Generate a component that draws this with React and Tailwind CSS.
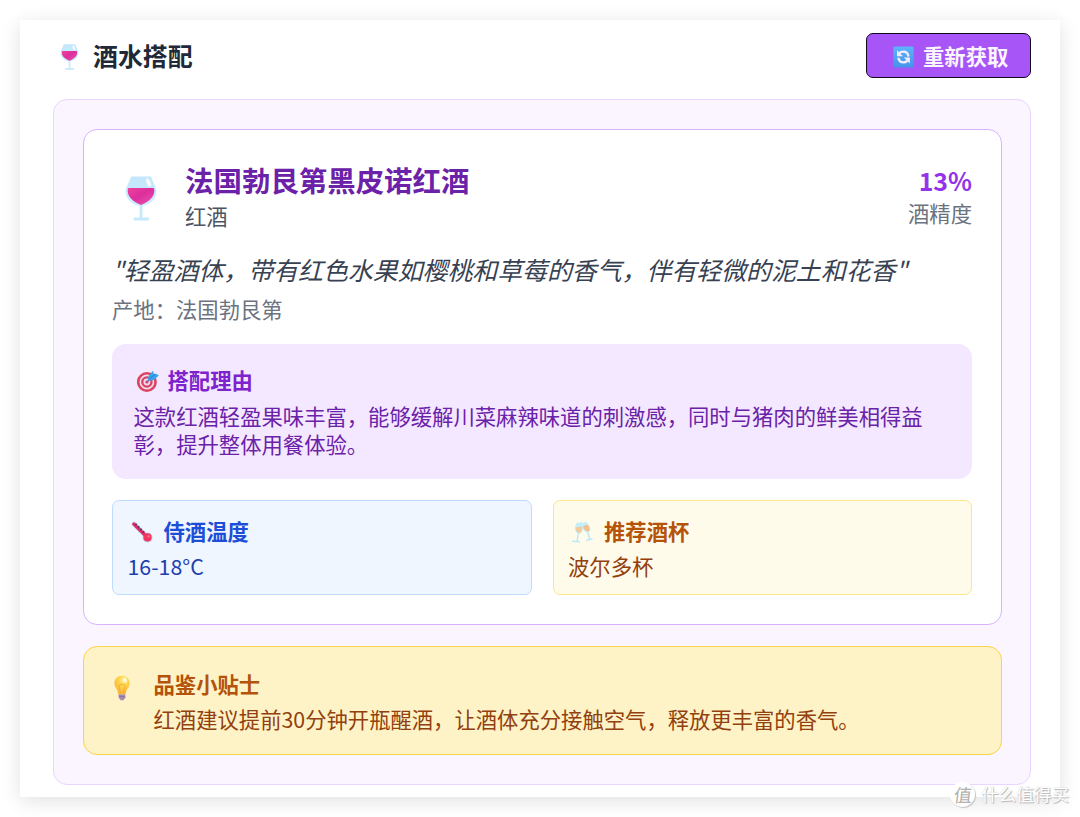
import React from 'react';

const WineGlass = ({ className }) => (
  <svg className={className} viewBox="0 0 32 45" fill="none">
    <defs>
      <linearGradient id="wine" x1="0" y1="0" x2="1" y2="1">
        <stop offset="0" stopColor="#f0409f" />
        <stop offset="0.45" stopColor="#dd2f9c" />
        <stop offset="0.75" stopColor="#e542a8" />
        <stop offset="1" stopColor="#9a3a9c" />
      </linearGradient>
      <linearGradient id="bowl" x1="0" y1="0" x2="0" y2="1">
        <stop offset="0" stopColor="#c3e6fc" />
        <stop offset="1" stopColor="#cdeefe" />
      </linearGradient>
    </defs>
    <path d="M7.5 .5h17c1 0 1.700.5 2 1.400L31 12.500c2 9-5 16.500-15 17.500C6 29-1 21.500 1 12.500L5.500 1.900C5.800 1 6.500.5 7.500.5Z" fill="url(#bowl)" />
    <rect x="14.600" y="29" width="2.800" height="14" fill="#c5eafc" />
    <rect x="8.500" y="41.500" width="15.500" height="3" rx="1" fill="#c5eafc" />
    <path d="M2.800 12.800q.3-.8 1.200-.8h24q.9 0 1.200.8c1 7.500-4.500 12.500-13.200 16.200C7.300 25.300 1.800 20.300 2.800 12.800Z" fill="url(#wine)" />
    <ellipse cx="23.500" cy="6.500" rx="2" ry="4.500" transform="rotate(-22 23.500 6.500)" fill="#f3fbff" />
  </svg>
);

const RefreshEmoji = () => (
  <svg className="mt-[3px] h-[22px] w-[21px]" viewBox="0 0 21 22" fill="none">
    <defs>
      <linearGradient id="tile" x1="0" y1="0" x2="0" y2="1">
        <stop offset="0" stopColor="#5cb3fb" />
        <stop offset="1" stopColor="#4593e8" />
      </linearGradient>
    </defs>
    <rect x="0.300" y="0.500" width="20.400" height="21" rx="1.500" fill="url(#tile)" />
    <path d="M15.500 10.500C15 7.200 12.500 5.600 10 5.700c-1.500 0-2.800.6-3.700 1.500" stroke="#f3eeff" strokeWidth="2.300" />
    <path d="M4 4.200v6h6Z" fill="#f3eeff" />
    <path d="M5.300 11.800c.5 3 2.700 4.600 5.200 4.600 1.500 0 2.800-.6 3.700-1.500" stroke="#f3eeff" strokeWidth="2.300" />
    <path d="M16.800 17.500v-6h-6Z" fill="#f3eeff" />
  </svg>
);

const TargetEmoji = () => (
  <svg className="h-[22px] w-[22px]" viewBox="0 0 22 22" fill="none">
    <circle cx="9.900" cy="12" r="8.700" fill="#f3dbe9" stroke="#dc4562" strokeWidth="2.600" />
    <circle cx="9.900" cy="12" r="4.600" fill="#f3dbe9" stroke="#d9436a" strokeWidth="2.300" />
    <circle cx="9.900" cy="12" r="1.600" fill="#d9436a" />
    <path d="M10 12l5-5.500" stroke="#5a6fb0" strokeWidth="1.300" />
    <path d="M11 9.500 11.500 6 16 .8l.8 3 3 .2 2 1.500-5 4.500-4.500.8Z" fill="#37a4ee" />
    <path d="m12.500 9.200 5.500-5" stroke="#2481cf" />
  </svg>
);

const ThermometerEmoji = () => (
  <svg className="h-[22px] w-[22px]" viewBox="0 0 22 22" fill="none">
    <path d="m3 3 13 13" stroke="#c8dcf3" strokeWidth="4.800" strokeLinecap="round" />
    <circle cx="16.600" cy="16.500" r="5" fill="#b7d4ed" />
    <path d="m2.800 3 13.200 13" stroke="#e22b61" strokeWidth="3.200" strokeLinecap="round" />
    <circle cx="16.500" cy="16.400" r="4.100" fill="#f23460" />
    <circle cx="17.500" cy="15.300" r="1.200" fill="#ff7185" />
    <path d="M5.700 2.700 4.300 4.100M8.200 5.200 6.800 6.600M10.700 7.700 9.300 9.100M13.200 10.200l-1.400 1.400" stroke="#55356f" strokeWidth="1.500" />
  </svg>
);

const ClinkEmoji = () => (
  <svg className="h-[22px] w-[22px]" viewBox="0 0 22 22" fill="none">
    <path d="M5.500 2 11 1l.8 6c.3 3-1.500 5.500-4.300 6C4.800 12 3.600 9 4 6Z" fill="#c4eef8" />
    <path d="M5 6.500 11 5.500c.6 3.600-.7 5.800-3.300 6.500C5.500 11 4.500 9 5 6.500Z" fill="#f6c995" />
    <path d="m7.200 12.500-1 7.500M1 20.300l8 .4" stroke="#bde9f5" strokeWidth="1.500" />
    <path d="m11 2 4.500-1.200 3.200 5c1.500 2.700.8 5-1.700 6-3-.5-5.200-2.700-5.700-5.500Z" fill="#c4eef8" />
    <path d="m12 5 4.800-1.200c2.200 3.200 2.200 5.700.3 6.700C14.500 10 12.500 8.200 12 5Z" fill="#f5bf88" />
    <path d="m16.800 11.500 2 7M15 19.500l6.500-1.800" stroke="#bde9f5" strokeWidth="1.500" />
  </svg>
);

const BulbEmoji = () => (
  <svg className="h-[26px] w-[18px]" viewBox="0 0 18 26" fill="none">
    <defs>
      <radialGradient id="bulb" cx="0.600" cy="0.250" r="0.750">
        <stop offset="0" stopColor="#fff0a0" />
        <stop offset="0.400" stopColor="#ffd449" />
        <stop offset="1" stopColor="#fbb23d" />
      </radialGradient>
    </defs>
    <path d="M9 .8c4.500 0 7.600 3.200 7.600 7.500 0 4.200-3.400 5.700-3.900 11.200H5.300C4.800 14 1.400 12.500 1.400 8.300 1.400 4 4.500.8 9 .8Z" fill="url(#bulb)" />
    <path d="M7.500 18.500 6 10.500c1-1.800 5-1.800 6 0l-1.500 8" stroke="#f2ae35" strokeWidth="1" />
    <ellipse cx="12" cy="5" rx="1.800" ry="2.700" transform="rotate(-30 12 5)" fill="#fff8d6" />
    <path d="M5.700 19.500h6.600v3.200l-2 2.500H7.700l-2-2.500Z" fill="#a68ab5" />
    <path d="m5.700 21 6.600 1" stroke="#8a6fa3" />
  </svg>
);

const InfoCard = ({ icon, title, value, className, titleClass, valueClass }) => (
  <div className={`h-[95px] rounded-[7px] border px-[14.500px] pt-[12px] ${className}`}>
    <div className="flex h-[35px] items-center">
      <span className="ml-[3px] flex w-[33px] pt-[2px]">{icon}</span>
      <span className={`font-bold ${titleClass}`}>{title}</span>
    </div>
    <div className={`leading-[35px] ${valueClass}`}>{value}</div>
  </div>
);

const Watermark = () => (
  <div className="absolute top-[782px] left-[950px] flex items-center gap-[6px] whitespace-nowrap">
    <div className="flex h-[25px] w-[25px] items-center justify-center rounded-full bg-white text-[18px] leading-6 text-[#b0b0b0] shadow-[1px_1px_1px_#c4c4c4]">
      <span className="-mt-[2px] -skew-x-6">值</span>
    </div>
    <span className="-mt-[2px] text-[17.600px] leading-[26px] text-white [text-shadow:1px_1px_1px_#b4b4b4,0_0_1px_#c4c4c4]">什么值得买</span>
  </div>
);

const App = () => {
  return (
    <div className="relative h-[817px] w-[1080px] overflow-hidden bg-white p-5 font-['Noto_Sans_CJK_SC',sans-serif] text-[21.330px]">
      <div className="h-[777px] rounded-[2px] bg-white pt-[13px] pr-[29px] pl-[33px] shadow-[0_4px_20px_rgba(0,0,0,0.12)]">
        <div className="flex h-[45px] items-center justify-between">
          <h2 className="-mt-px flex items-center text-[24.900px] leading-9 font-bold text-[#1f2937]">
            <WineGlass className="mt-[3px] mr-[14px] ml-[7px] h-[26px] w-[19px]" />
            酒水搭配
          </h2>
          <button className="flex h-[45px] w-[165px] items-center rounded-[7px] border border-[#12081e] bg-[#a855f7] pl-[26px] font-bold text-[#faf5ff]">
            <RefreshEmoji />
            <span className="ml-[9px]">重新获取</span>
          </button>
        </div>

        <div className="mt-[21px] h-[686px] rounded-[14px] border border-[#e9d5ff] bg-[#faf5ff] px-[28.500px] pt-[29px]">
          <div className="h-[496px] rounded-[14px] border border-[#d8b4fe] bg-white px-[28.500px] pt-[32px]">
            <div className="flex h-[74px]">
              <WineGlass className="mt-[14px] ml-[13px] h-[45px] w-[32px]" />
              <div className="ml-[28px] flex-1">
                <h3 className="text-[28.440px] leading-[36px] font-bold text-[#6b21a8]">法国勃艮第黑皮诺红酒</h3>
                <p className="leading-[35px] text-[#4b5563]">红酒</p>
              </div>
              <div className="text-right">
                <div className="text-[24.900px] leading-[36px] font-bold text-[#9333ea]">13%</div>
                <div className="leading-[29px] text-[#6b7280]">酒精度</div>
              </div>
            </div>
            <p className="mt-[13px] text-[24.900px] leading-[40px] whitespace-nowrap text-[#374151] italic">
              "轻盈酒体，带有红色水果如樱桃和草莓的香气，伴有轻微的泥土和花香"
            </p>
            <p className="leading-[40px] text-[#6b7280]">产地：法国勃艮第</p>

            <div className="mt-[15px] h-[135px] rounded-[14px] bg-[#f3e8ff] px-[21.500px] pt-[18px]">
              <div className="flex h-9 items-center">
                <span className="mt-px mr-[9px] ml-[3px]">
                  <TargetEmoji />
                </span>
                <span className="font-bold text-[#7e22ce]">搭配理由</span>
              </div>
              <p className="mt-[4px] leading-[28.400px] text-[#6b21a8]">
                这款红酒轻盈果味丰富，能够缓解川菜麻辣味道的刺激感，同时与猪肉的鲜美相得益彰，提升整体用餐体验。
              </p>
            </div>

            <div className="mt-[21px] grid grid-cols-2 gap-[21px]">
              <InfoCard
                icon={<ThermometerEmoji />}
                title="侍酒温度"
                value="16-18°C"
                className="border-[#bfdbfe] bg-[#eff6ff]"
                titleClass="text-[#1d4ed8]"
                valueClass="text-[#1e40af]"
              />
              <InfoCard
                icon={<ClinkEmoji />}
                title="推荐酒杯"
                value="波尔多杯"
                className="border-[#fde68a] bg-[#fffbeb]"
                titleClass="text-[#b45309]"
                valueClass="text-[#92400e]"
              />
            </div>
          </div>

          <div className="mt-[21px] flex h-[109px] rounded-[14px] border border-[#fcd34d] bg-[#fef3c7] pt-[19px] pl-[29px]">
            <div className="mt-[9px] w-[41px]">
              <BulbEmoji />
            </div>
            <div>
              <h4 className="leading-[35px] font-bold text-[#b45309]">品鉴小贴士</h4>
              <p className="leading-[35px] text-[#92400e]">红酒建议提前30分钟开瓶醒酒，让酒体充分接触空气，释放更丰富的香气。</p>
            </div>
          </div>
        </div>
      </div>
      <Watermark />
    </div>
  );
};

export default App;
